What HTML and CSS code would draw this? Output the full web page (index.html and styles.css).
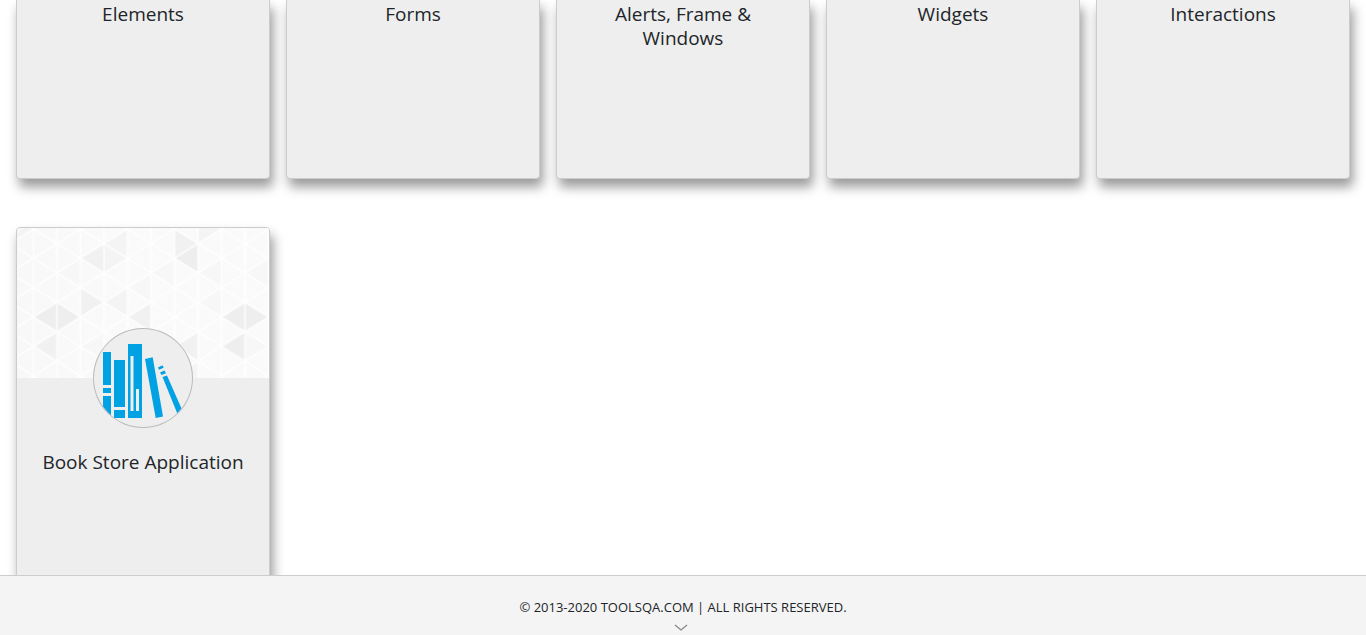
FILE: index.html
```html
<!DOCTYPE html>
<html lang="en">
<head>
<meta charset="utf-8">
<title>ToolsQA</title>
<link rel="stylesheet" href="styles.css">
</head>
<body>
<main class="content">
  <div class="cards">
    <section class="card card-tail"><h5 class="card-title">Elements</h5></section>
    <section class="card card-tail"><h5 class="card-title">Forms</h5></section>
    <section class="card card-tail"><h5 class="card-title">Alerts, Frame &amp; Windows</h5></section>
    <section class="card card-tail"><h5 class="card-title">Widgets</h5></section>
    <section class="card card-tail"><h5 class="card-title">Interactions</h5></section>
    <section class="card card-full">
      <div class="banner">
        <svg class="banner-art" viewBox="0 0 252 150" preserveAspectRatio="xMidYMid slice" aria-hidden="true">
          <defs>
            <pattern id="mesh" x="16.5" y="0.8" width="47" height="29.4" patternUnits="userSpaceOnUse">
              <path d="M0 0V29.4M23.5 0V29.4M47 0V29.4M0 0L47 29.4M0 29.4L47 0" fill="none" stroke="#fff" stroke-opacity="0.8" stroke-width="1.6"/>
            </pattern>
            <linearGradient id="fade" x1="0" y1="0" x2="1" y2="0">
              <stop offset="0" stop-color="#f8f8f8"/><stop offset="0.45" stop-color="#fafafa"/><stop offset="1" stop-color="#fafafa"/>
            </linearGradient>
          </defs>
          <rect width="252" height="150" fill="url(#fade)"/>
          <g fill="#eeeeee">
            <path d="M16.5 89L40 74.5V104z"/><path d="M63.5 89L40 74.5V104z"/>
            <path d="M157.5 30L181 15.5V45z"/><path d="M204.5 89L228 74.5V104z"/>
            <path d="M251.5 89L228 74.5V104z"/><path d="M204.5 118.5L228 104V133.5z"/>
          </g>
          <g fill="#f1f1f1">
            <path d="M16.5 118.5L40 104V133.5z"/><path d="M63.5 59.5V89L87 74.5z"/>
            <path d="M63.5 30L87 15.5V45z"/><path d="M110.5 89L134 74.5V104z"/>
            <path d="M157.5 1V30L181 15.5z"/><path d="M157.5 118.5L181 104V133.5z"/>
          </g>
          <g fill="#f4f4f4">
            <path d="M110.5 30L87 15.5V45z"/><path d="M87 15.5L110.5 1V30z"/>
            <path d="M87 74.5L110.5 59.5V89z"/><path d="M181 -14V15.5L204.5 1z"/>
            <path d="M157.5 148L181 133.5V163z"/><path d="M-7 15.5L16.5 1V-14z"/>
          </g>
          <g fill="#f7f7f7">
            <path d="M40 45L63.5 30V59.5z"/><path d="M110.5 59.5L134 45V74.5z"/>
            <path d="M134 45L157.5 30V59.5z"/><path d="M181 45L204.5 30V59.5z"/>
            <path d="M181 74.5L204.5 59.5V89z"/><path d="M228 45L251.5 30V59.5z"/>
            <path d="M63.5 118.5L87 104V133.5z"/><path d="M228 104V133.5L251.5 118.5z"/>
          </g>
          <rect width="252" height="150" fill="url(#mesh)"/>
        </svg>
      </div>
      <div class="avatar">
        <svg class="avatar-icon" viewBox="0 0 100 100" aria-hidden="true">
          <defs><clipPath id="disc"><circle cx="50" cy="50" r="49"/></clipPath></defs>
          <g clip-path="url(#disc)" fill="#00a2e4">
            <path d="M10 24h8v33h-8zM10 60h8v5h-8zM10 68h8v20h-8z"/>
            <path d="M21 32h11v47H21zM21 82h11v8H21z"/>
            <path fill-rule="evenodd" d="M35 16h14v74H35zM37.500 28v55h3V28zM43 61v22h3V61z"/>
            <path d="M52 31l7.700-1.700L70 88.500 62.700 90z"/>
            <path d="M65 39.500l4.500-2.200 1.200 2.500-4.700 2zM67 44.500l4.500-2 1.500 2.800-4.500 1.700zM69.500 49l4.500-1.500L88.500 80.500 84.500 86z"/>
          </g>
        </svg>
      </div>
      <h5 class="card-title">Book Store Application</h5>
    </section>
  </div>
</main>
<footer class="footer">
  <span>© 2013-2020 TOOLSQA.COM | ALL RIGHTS RESERVED.</span>
  <button class="collapse" type="button" aria-label="Collapse">
    <svg class="chevron" viewBox="0 0 14 8" aria-hidden="true"><path d="M1 1l6 5 6-5" fill="none" stroke="#888" stroke-width="1.300"/></svg>
  </button>
</footer>
</body>
</html>
```
FILE: styles.css
```css
* { box-sizing: border-box; }
body {
  margin: 0;
  height: 100vh;
  display: flex;
  flex-direction: column;
  background: #fff;
  color: #212529;
  font-family: "Segoe UI", "Open Sans", "Noto Sans", sans-serif;
}
.content { flex: 1; min-height: 0; overflow: hidden; }
.cards {
  display: grid;
  grid-template-columns: repeat(5, 1fr);
  gap: 48px 16px;
  padding: 0 16px;
}
.card {
  display: flex;
  flex-direction: column;
  align-items: center;
  background: #eee;
  border: 1px solid #ccc;
  border-radius: 4px;
  box-shadow: 3px 8px 12px rgba(0, 0, 0, 0.4);
}
.card-tail {
  min-height: 179px;
  padding: 2px 40px 0;
  border-top: 0;
  border-radius: 0 0 4px 4px;
}
.card-full { min-height: 400px; }
.card-title {
  margin: 0;
  font-size: 19px;
  font-weight: 400;
  line-height: 24px;
  text-align: center;
}
.banner { width: 100%; height: 150px; overflow: hidden; border-radius: 3px 3px 0 0; }
.banner-art { display: block; width: 100%; height: 100%; }
.avatar {
  width: 100px;
  height: 100px;
  margin: -50px 0 22px;
  border-radius: 50%;
  background: #eee;
  box-shadow: inset 0 0 0 1px #bbb;
}
.avatar-icon { display: block; width: 100%; height: 100%; }
.footer {
  height: 60px;
  display: flex;
  flex-direction: column;
  align-items: center;
  padding-top: 22px;
  background: #f4f4f4;
  border-top: 1px solid #ccc;
  font-size: 13px;
  line-height: 18px;
}
.collapse {
  margin: 8px 4px 0 0;
  padding: 0;
  border: 0;
  background: none;
}
.chevron { display: block; width: 14px; height: 8px; }
```
